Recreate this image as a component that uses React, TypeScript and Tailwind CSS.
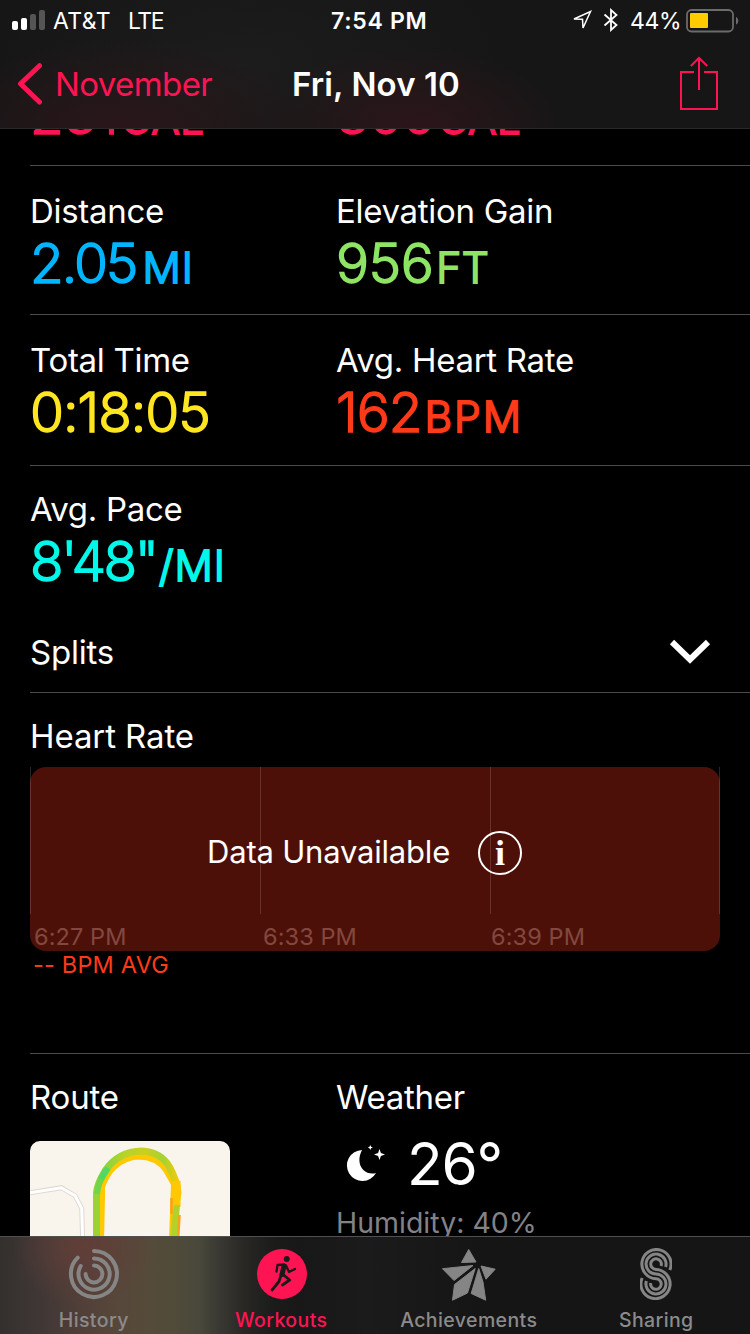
import type { ReactNode } from "react";
import clsx from "clsx";

interface MetricProps {
  label?: string;
  value: string;
  unit?: string;
  className: string;
  unitClassName?: string;
}

function Metric({ label, value, unit, className, unitClassName }: MetricProps) {
  return (
    <div>
      {label && <p className="text-[33px] leading-10 tracking-[-0.3px]">{label}</p>}
      <p
        className={clsx(
          "mt-0.5 h-[60px] whitespace-nowrap text-[55px] font-light leading-[61px] [-webkit-text-stroke:1.4px_currentColor] [stroke-linejoin:round]",
          className,
        )}
      >
        {value}
        {unit && (
          <span className={clsx("text-[42.500px] leading-none [-webkit-text-stroke:1.9px_currentColor]", unitClassName)}>
            {unit}
          </span>
        )}
      </p>
    </div>
  );
}

interface MetricRowProps {
  className: string;
  children: ReactNode;
}

function MetricRow({ className, children }: MetricRowProps) {
  return (
    <div
      className={clsx(
        "ml-[30px] grid shrink-0 grid-cols-[306px_1fr] border-[#4a4a4a]",
        className,
      )}
    >
      {children}
    </div>
  );
}

function StatusBar() {
  return (
    <div className="grid h-10 grid-cols-[331px_1fr_178px] text-[23px] leading-[42px]">
      <div className="flex h-10 items-center pl-3">
        <svg width="41" height="20" viewBox="0 0 41 20" fill="#fff" className="shrink-0">
          <rect x="0" y="11" width="6" height="9" rx="2" />
          <rect x="9" y="8" width="6" height="12" rx="2" />
          <rect x="18" y="4" width="6" height="16" rx="2" fill="#555" />
          <rect x="27" y="0" width="6" height="20" rx="2" fill="#555" />
        </svg>
        <span className="w-[75px] pt-0.5 tracking-[0.4px]">AT&amp;T</span>
        <span className="pt-0.5 tracking-[-1.5px]">LTE</span>
      </div>
      <span className="font-semibold tracking-[0.7px]">7:54 PM</span>
      <div className="flex h-10 items-center">
        <svg width="20" height="20" viewBox="0 0 20 20" fill="none" stroke="#fff" strokeWidth="1.5" className="shrink-0">
          <path d="M2 9 18.5 1.5 11 18 10.5 9.3Z" />
        </svg>
        <svg width="16" height="24" viewBox="0 0 16 24" fill="none" stroke="#fff" strokeWidth="1.8" className="ml-[11px] shrink-0">
          <path d="M1.5 6.500 13.500 17 8 22V2l5.500 5L1.5 17.500" />
        </svg>
        <span className="ml-[11px] w-[56px] pt-0.5 tracking-[-0.4px]">44%</span>
        <svg width="54" height="24" viewBox="0 0 54 24" className="mt-px shrink-0">
          <rect x="1" y="1" width="46" height="21.5" rx="4.5" fill="none" stroke="#6b6b6b" strokeWidth="1.8" />
          <rect x="4" y="4" width="18" height="15" rx="1" fill="#ffcc00" />
          <path d="M50 8c3 1 3 6.5 0 7.500Z" fill="#6b6b6b" />
        </svg>
      </div>
    </div>
  );
}

function NavBar() {
  return (
    <div className="grid h-[88px] grid-cols-[250px_250px_250px] items-center text-[33px]">
      <div className="flex items-center pl-[17px] text-[#ff1453]">
        <svg width="25" height="42" viewBox="0 0 25 42" fill="none" stroke="currentColor" strokeWidth="5" strokeLinecap="round" strokeLinejoin="round">
          <path d="M22.500 2.700 3.500 20.800 22.500 39" />
        </svg>
        <span className="ml-[13px] pt-0.5 tracking-[-0.6px]">November</span>
      </div>
      <h1 className="pl-0.5 pt-0.5 text-center font-semibold tracking-[0.1px]">Fri, Nov 10</h1>
      <svg width="40" height="54" viewBox="0 0 40 54" fill="none" stroke="#ff1453" strokeWidth="2" className="-mt-0.5 mr-[31px] justify-self-end">
        <path d="M15 16H2v37h36V16H25" />
        <path d="M20 34V2M11.800 10 20 1.800 28.200 10" />
      </svg>
    </div>
  );
}

function HeartRateChart() {
  return (
    <div className="relative ml-[30px] mt-[11px] h-[184px] w-[690px]">
      <div className="absolute inset-0 rounded-2xl bg-[#4d1008]" />
      <div className="absolute inset-x-0 top-0 grid h-[147px] grid-cols-[230px_230px_229px_1px]">
        <i className="w-px bg-white/15" />
        <i className="w-px bg-white/15" />
        <i className="w-px bg-white/15" />
        <i className="w-px bg-white/15" />
      </div>
      <div className="absolute inset-x-0 bottom-0 grid grid-cols-[229px_228px_1fr] pl-1 text-[23.500px] leading-7 tracking-[0.1px] text-[#82483f]">
        <span>6:27 PM</span>
        <span>6:33 PM</span>
        <span>6:39 PM</span>
      </div>
      <div className="relative flex h-[172px] items-center pl-[177px] text-[31px]">
        <span className="w-[271px] pb-0.5 tracking-[-0.2px]">Data Unavailable</span>
        <span className="grid size-11 place-items-center rounded-full border-2 border-white font-['Liberation_Serif',serif] text-[36px] font-bold leading-none">
          i
        </span>
      </div>
    </div>
  );
}

function RouteMap() {
  return (
    <svg width="200" height="200" viewBox="0 0 200 200" fill="none" className="mt-6 rounded-[10px] bg-[#f9f5ed]">
      <defs>
        <linearGradient id="pace" x1="65" y1="0" x2="150" y2="0" gradientUnits="userSpaceOnUse">
          <stop offset="0" stopColor="#9dd235" />
          <stop offset=".15" stopColor="#8fd43a" />
          <stop offset=".35" stopColor="#b5d42a" />
          <stop offset=".6" stopColor="#c9cf20" />
          <stop offset=".8" stopColor="#a5d233" />
          <stop offset="1" stopColor="#ffc800" />
        </linearGradient>
      </defs>
      <path d="M0 51.700 31.300 46.700 45 54.700 51.700 67.300 52.700 100" stroke="#dedad3" strokeWidth="5" />
      <path d="M0 51.700 31.300 46.700 45 54.700 51.700 67.300 52.700 100" stroke="#fff" strokeWidth="3" />
      <path d="M71 100 72 56V46Q76 34 84 26 95 15.500 110 15.500 127 16 136 29L144 43 142 100" stroke="#ffc800" strokeWidth="6" />
      <path d="M66.500 100V52Q67 43 75 30 88 10.500 111.700 10 131 11 139.500 26 148 42 148 52L145 70 143.500 100" stroke="url(#pace)" strokeWidth="7" />
      <path d="M67 53Q68 41 76 29" stroke="#6fd64c" strokeWidth="6" />
      <path d="M71 38 78 27" stroke="#4fd963" strokeWidth="6" />
      <path d="M146.500 40V66" stroke="#ffc800" strokeWidth="8" />
      <path d="M147 64 144 100" stroke="#b0d22d" strokeWidth="6" />
      <path d="M141.500 57V73M149.500 74 148 100" stroke="#ff9f1a" strokeWidth="2.500" />
    </svg>
  );
}

function HistoryIcon() {
  return (
    <svg width="52" height="52" viewBox="0 0 52 52" fill="none" stroke="#858585" strokeWidth="4" strokeLinecap="round">
      <path d="M26 3A23 23 0 1 1 9.700 9.700" />
      <path d="M26 10.400A15.600 15.600 0 1 1 12.700 18" />
      <path d="M26 17.600A8.400 8.400 0 1 1 17.600 26" />
    </svg>
  );
}

function WorkoutsIcon() {
  return (
    <svg width="52" height="52" viewBox="0 0 52 52" fill="none" stroke="#1a1a1a" strokeLinecap="round" strokeLinejoin="round" className="ml-0.5">
      <circle cx="26" cy="26" r="25" fill="#ff1453" stroke="none" />
      <circle cx="30.700" cy="11" r="3" fill="#1a1a1a" stroke="none" />
      <path d="M28 18 26 26.500" strokeWidth="5" />
      <path d="M28 16.500 21.500 17 20.500 23.500M30 17.500 33 24 39 21" strokeWidth="2.300" />
      <path d="M27 26.500 33.700 32 26.300 37M25 27 23 33.500 16 42" strokeWidth="2.800" />
    </svg>
  );
}

function AchievementsIcon() {
  return (
    <svg width="56" height="54" viewBox="0 0 56 54" fill="#858585" stroke="#858585" strokeWidth="1" strokeLinejoin="round">
      <path d="M27.700 1.500 35 14 20.500 14.500Z" />
      <path d="M1.500 20.700 32 17.500 13 32.500Z" />
      <path d="M40 18 54.200 21.200 45 31.200Z" />
      <path d="M34.200 20.500 26.500 45 11.500 52.200 13.500 36.500Z" />
      <path d="M37.700 20.500 42 34 44.700 52.200 30.200 45.500Z" />
    </svg>
  );
}

function SharingIcon() {
  return (
    <svg width="32" height="52" viewBox="0 0 32 52" fill="none" stroke="#858585" strokeWidth="3">
      <path d="M29.800 22A14.600 14.600 0 1 0 16 30.700A5.300 5.300 0 1 1 10.700 35" />
      <path d="M25.600 19A10 10 0 1 0 16 26A10 10 0 1 1 6.400 33" />
      <path d="M21 18A5.300 5.300 0 1 0 16 21.400A14.600 14.600 0 1 1 2.200 30" />
    </svg>
  );
}

interface TabProps {
  label: string;
  icon: ReactNode;
  active?: boolean;
}

function Tab({ label, icon, active }: TabProps) {
  return (
    <div className="flex flex-col items-center pt-[11px]">
      <div className="flex h-[54px] items-start">{icon}</div>
      <span
        className={clsx(
          "mt-1.5 text-[19.500px] font-medium leading-6 tracking-[0.4px]",
          active ? "text-[#ff1453]" : "text-[#8b8b8b]",
        )}
      >
        {label}
      </span>
    </div>
  );
}

export default function App() {
  return (
    <div className="flex h-[1334px] w-[750px] flex-col overflow-hidden bg-black font-[Inter,'Liberation_Sans',sans-serif] text-white">
      <header className="h-[129px] shrink-0 border-b border-[#2b2829] bg-[#161616] bg-[radial-gradient(ellipse_190px_90px_at_120px_128px,#2a161a,transparent),radial-gradient(ellipse_150px_80px_at_415px_126px,#2c151a,transparent),radial-gradient(ellipse_260px_130px_at_250px_60px,#1d1c1c,transparent)]">
        <StatusBar />
        <NavBar />
      </header>

      <main className="flex min-h-0 flex-1 flex-col overflow-hidden">
        {/* calories row, scrolled mostly under the header */}
        <MetricRow className="-mt-[47px] h-[84px] border-b">
          <Metric value="231" unit="CAL" className="text-[#ff1453]" unitClassName="ml-0.5 tracking-[0.2px]" />
          <Metric value="300" unit="CAL" className="tracking-[-0.5px] text-[#ff1453]" unitClassName="ml-0.5 tracking-normal" />
        </MetricRow>
        <MetricRow className="h-[149px] border-b pt-[25px]">
          <Metric
            label="Distance"
            value="2.05"
            unit="MI"
            className="tracking-[-2px] text-[#00b5ff]"
            unitClassName="ml-1.5 tracking-[1px]"
          />
          <Metric
            label="Elevation Gain"
            value="956"
            unit="FT"
            className="tracking-[-0.5px] text-[#8ee563]"
            unitClassName="ml-[3px] tracking-[0.5px]"
          />
        </MetricRow>
        <MetricRow className="h-[151px] border-b pt-[25px]">
          <Metric label="Total Time" value="0:18:05" className="tracking-[-1px] text-[#ffe620]" />
          <Metric
            label="Avg. Heart Rate"
            value="162"
            unit="BPM"
            className="tracking-[-1px] text-[#ff3a18]"
            unitClassName="ml-[3px] tracking-[2px]"
          />
        </MetricRow>
        <MetricRow className="h-[144px] pt-[23px]">
          <Metric
            label="Avg. Pace"
            value={"8'48\""}
            unit="/MI"
            className="tracking-[-2.4px] text-[#00f8ea]"
            unitClassName="ml-0.5 tracking-[1px]"
          />
        </MetricRow>

        <div className="ml-[30px] flex h-[83px] shrink-0 items-start justify-between border-b border-[#4a4a4a] pr-[38px] pt-[22px]">
          <h2 className="text-[33px] leading-10 tracking-[-0.2px]">Splits</h2>
          <svg width="44" height="28" viewBox="0 0 44 28" fill="none" stroke="#fff" strokeWidth="6" className="mt-1.5">
            <path d="M4 4 22 21.500 40 4" />
          </svg>
        </div>

        <section className="h-[360px] shrink-0">
          <h2 className="ml-[30px] pt-[23px] text-[33px] leading-10 tracking-[-0.1px]">Heart Rate</h2>
          <HeartRateChart />
          <p className="ml-[33px] text-[23.500px] leading-7 tracking-[0.2px] text-[#ff3a18]">-- BPM AVG</p>
        </section>

        <section className="ml-[30px] grid h-[300px] shrink-0 grid-cols-[306px_1fr] border-t border-[#4a4a4a] pt-[23px]">
          <div>
            <h2 className="text-[33px] leading-10 tracking-[-0.2px]">Route</h2>
            <RouteMap />
          </div>
          <div>
            <h2 className="text-[33px] leading-10 tracking-[-0.3px]">Weather</h2>
            <div className="mt-4 flex h-[72px] pl-2.5">
              <svg width="42" height="42" viewBox="0 0 42 42" fill="#fff" className="mt-3">
                <path d="M16 5A15.500 15.500 0 1 0 30 28C20 31 8 21 16 5Z" />
                <path d="M24.300 0 25.100 1.700 26.800 2.500 25.100 3.300 24.300 5 23.500 3.300 21.800 2.500 23.500 1.700Z" />
                <path d="M33.500 4 34.900 8.100 39 9.500 34.900 10.900 33.500 15 32.100 10.900 28 9.500 32.100 8.100Z" />
              </svg>
              <span className="ml-[19px] text-[58.500px] leading-[62px] tracking-[-1.2px]">26°</span>
            </div>
            <p className="text-[28.500px] leading-9 text-[#828287]">Humidity: 40%</p>
          </div>
        </section>
      </main>

      <nav className="grid h-[98px] shrink-0 grid-cols-4 border-t border-[#505050] bg-[radial-gradient(ellipse_70px_60px_at_84px_10px,#613e38,transparent),linear-gradient(90deg,#34302e_0px,#413836_45px,#513f38_82px,#56473a_115px,#554b3a_150px,#504b3a_175px,#48483b_200px,#3a3933_218px,#282724_245px,#1b1b1a_275px,#181818_300px,#1b1b1b_370px,#151515_480px)]">
        <Tab label="History" icon={<HistoryIcon />} />
        <Tab label="Workouts" icon={<WorkoutsIcon />} active />
        <Tab label="Achievements" icon={<AchievementsIcon />} />
        <Tab label="Sharing" icon={<SharingIcon />} />
      </nav>
    </div>
  );
}
